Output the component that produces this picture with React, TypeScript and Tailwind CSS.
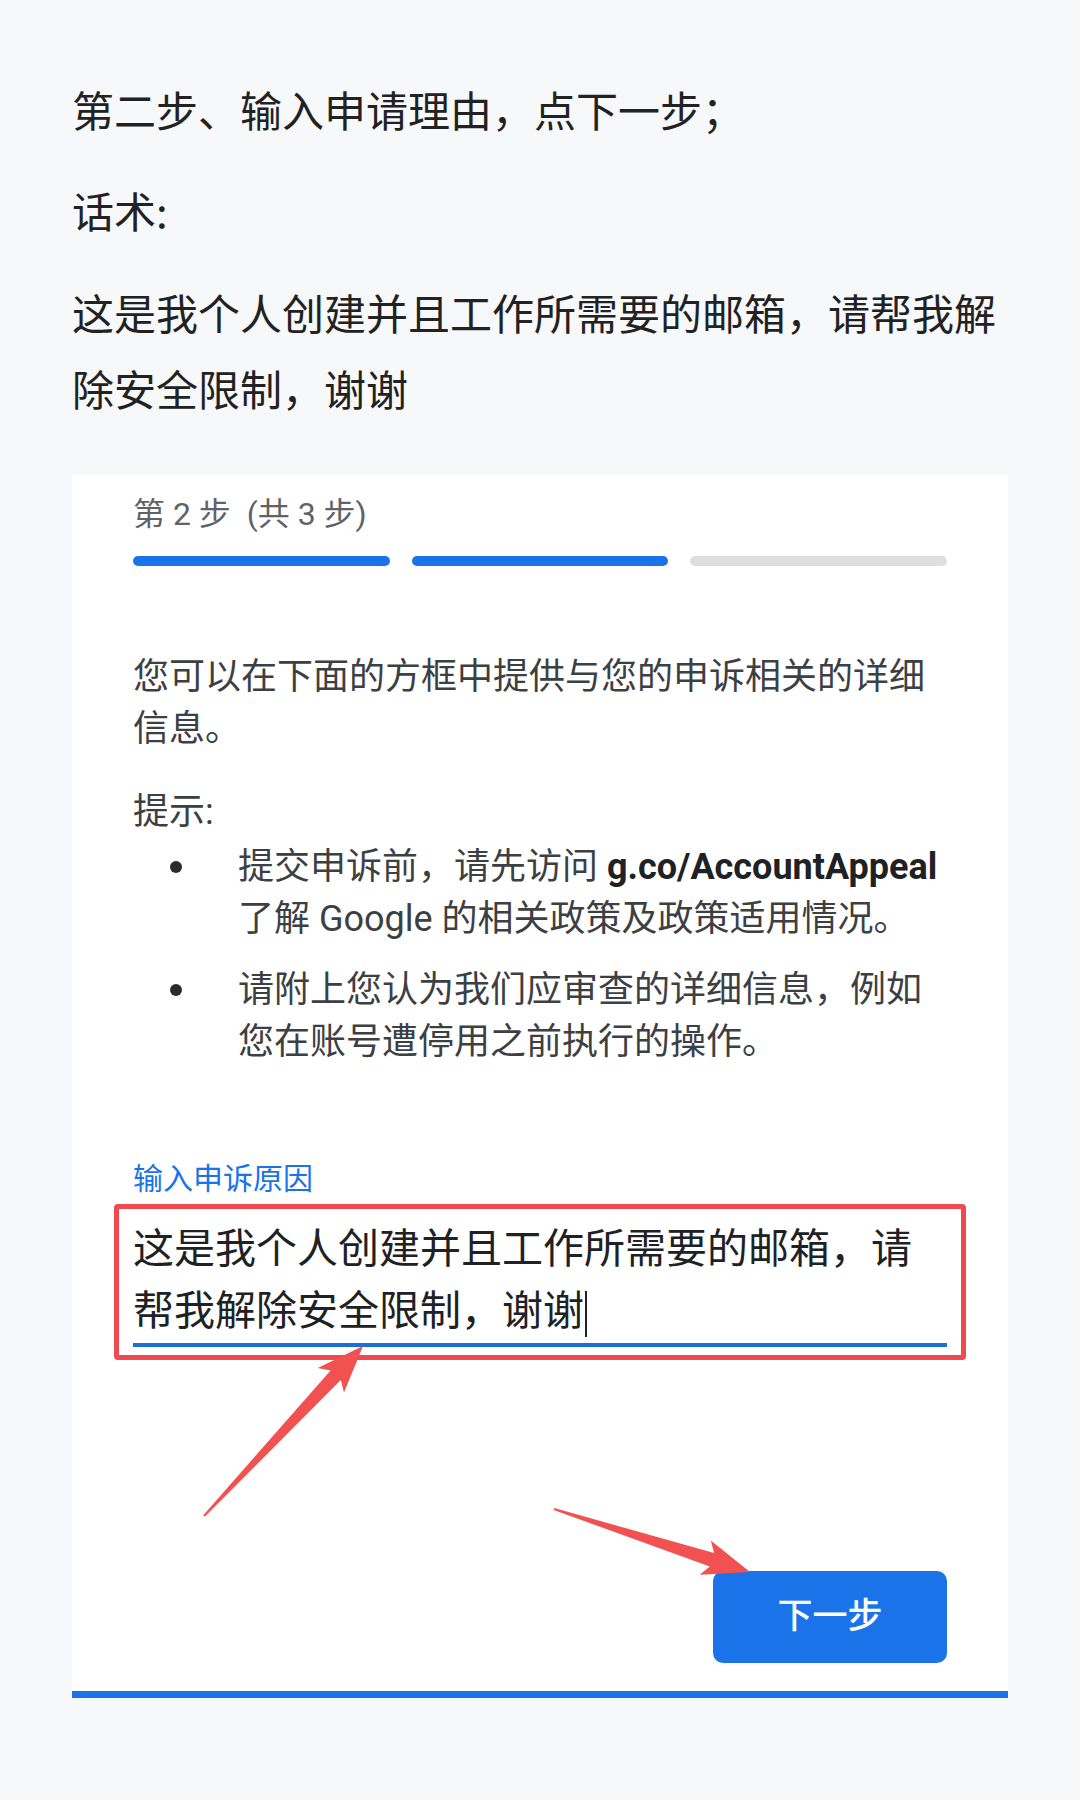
import React from 'react';

type Pt = [number, number];

// tapered annotation arrow: thin tail, wide swept head
function arrowPoints(tail: Pt, tip: Pt, headLen = 47, headHalf = 18, neck = 40, neckHalf = 7) {
  const dx = tail[0] - tip[0];
  const dy = tail[1] - tip[1];
  const len = Math.hypot(dx, dy);
  const ux = dx / len;
  const uy = dy / len;
  const nx = -uy;
  const ny = ux;
  const at = (along: number, side: number): Pt => [tip[0] + ux * along + nx * side, tip[1] + uy * along + ny * side];
  const pts: Pt[] = [
    at(len, 1),
    at(neck, neckHalf),
    at(headLen, headHalf),
    tip,
    at(headLen, -headHalf),
    at(neck, -neckHalf),
    at(len, -1),
  ];
  return pts.map((p) => `${p[0].toFixed(1)},${p[1].toFixed(1)}`).join(' ');
}

const arrows: { tail: Pt; tip: Pt }[] = [
  { tail: [132, 1041], tip: [291, 871] },
  { tail: [482, 1034], tip: [678, 1097] },
];

function Bullet({ children, className }: { children: React.ReactNode; className?: string }) {
  return (
    <li className={'flex ' + (className ?? '')}>
      <span className="flex h-[52px] w-[105px] shrink-0 items-center pl-[37px]">
        <span className="h-[12px] w-[12px] rounded-full bg-[#2b2b2b]" />
      </span>
      <div className="min-w-0 flex-1">{children}</div>
    </li>
  );
}

export default function App() {
  return (
    <div className="min-h-[1800px] w-[1080px] overflow-hidden bg-[#f7f8fa] px-[72px] pt-[71px] font-['Noto_Sans_CJK_SC',sans-serif]">
      {/* intro text */}
      <p className="text-[42px] leading-[76px] text-[#222222]">第二步、输入申请理由，点下一步；</p>
      <p className="mt-[25px] text-[42px] leading-[76px] text-[#222222]">话术:</p>
      <p className="mt-[26px] text-[42px] leading-[76px] text-[#222222]">
        这是我个人创建并且工作所需要的邮箱，请帮我解除安全限制，谢谢
      </p>

      {/* appeal form screenshot */}
      <div className="relative mt-[49px] border-b-[7px] border-[#1a73e8] bg-white px-[61px] pb-[28px] pt-[19px] font-['Roboto','Noto_Sans_CJK_SC',sans-serif]">
        <div className="text-[32px] leading-[40px] text-[#5f6368]">第 2 步 &nbsp;(共 3 步)</div>

        <div className="mt-[22px] flex gap-[22px]">
          <div className="h-[10px] flex-1 rounded-full bg-[#1a73e8]" />
          <div className="h-[10px] flex-1 rounded-full bg-[#1a73e8]" />
          <div className="h-[10px] flex-1 rounded-full bg-[#dedfe1]" />
        </div>

        <p className="mt-[85px] text-[36px] leading-[52px] text-[#3c4043]">
          您可以在下面的方框中提供与您的申诉相关的详细信息。
        </p>

        <p className="mt-[31px] text-[36px] leading-[52px] text-[#3c4043]">提示:</p>
        <ul className="mt-[3px] text-[36px] leading-[52px] text-[#3c4043]">
          <Bullet>
            <span className="whitespace-nowrap">
              提交申诉前，请先访问 <b className="font-bold text-[#202124]">g.co/AccountAppeal</b>
            </span>
            <br />
            了解 Google 的相关政策及政策适用情况。
          </Bullet>
          <Bullet className="mt-[19px]">请附上您认为我们应审查的详细信息，例如您在账号遭停用之前执行的操作。</Bullet>
        </ul>

        <div className="mt-[91px] text-[30px] leading-[40px] text-[#1a73e8]">输入申诉原因</div>

        <div className="relative mt-[19px]">
          <div className="border-b-4 border-[#1a6fd6] pb-[1px] text-[41px] leading-[62px] text-[#202124]">
            这是我个人创建并且工作所需要的邮箱，请帮我解除安全限制，谢谢
            <span className="ml-[1px] inline-block h-[46px] w-[2px] bg-[#202124] align-middle" />
          </div>
          {/* red highlight box */}
          <div className="pointer-events-none absolute -bottom-[13px] -left-[19px] -right-[19px] -top-[14px] rounded-[4px] border-[5px] border-[#f04a50]" />
        </div>

        <div className="mt-[224px] flex justify-end">
          <button className="flex h-[92px] w-[234px] items-center justify-center rounded-[10px] bg-[#1a73e8] text-[35px] font-medium text-white">
            下一步
          </button>
        </div>

        <svg className="pointer-events-none absolute left-0 top-0 h-full w-full overflow-visible">
          {arrows.map((a, i) => (
            <polygon key={i} points={arrowPoints(a.tail, a.tip)} fill="#f25151" />
          ))}
        </svg>
      </div>
    </div>
  );
}
